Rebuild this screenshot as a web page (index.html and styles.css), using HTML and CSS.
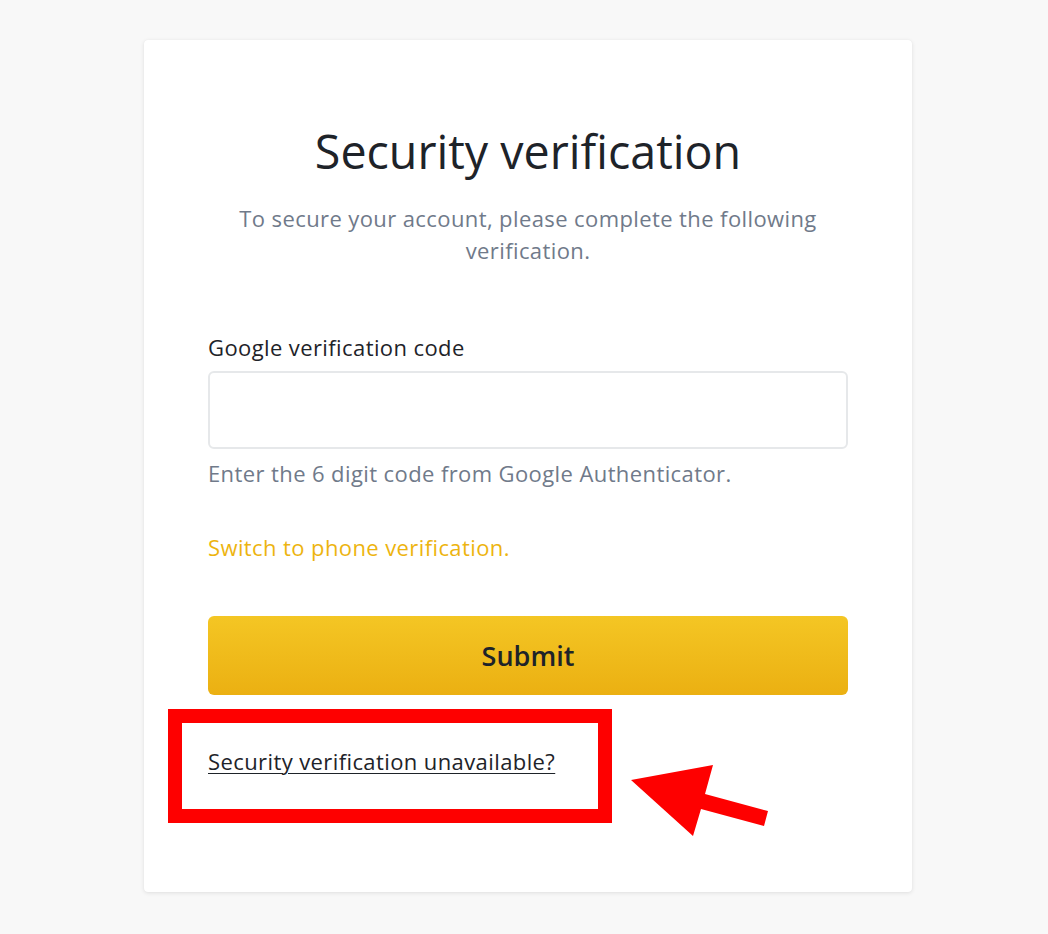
FILE: index.html
```html
<!DOCTYPE html>
<html lang="en">
<head>
<meta charset="utf-8">
<title>Security verification</title>
<link rel="stylesheet" href="styles.css">
</head>
<body>
<main class="page">
  <section class="card">
    <h1 class="title">Security verification</h1>
    <p class="subtitle">To secure your account, please complete the following verification.</p>
    <div class="field">
      <label class="label" for="code">Google verification code</label>
      <input class="input" id="code" type="text">
      <p class="help">Enter the 6 digit code from Google Authenticator.</p>
    </div>
    <a class="switch" href="#">Switch to phone verification.</a>
    <button class="submit" type="button">Submit</button>
    <div class="unavail-wrap">
      <a class="unavail" href="#">Security verification unavailable?</a>
      <div class="highlight"></div>
      <svg class="arrow" width="140" height="76" viewBox="0 0 140 76">
        <polygon points="2,15 84,0 76,29 139,46 135,61 72,44 64,71" fill="#fe0000"/>
      </svg>
    </div>
  </section>
</main>
</body>
</html>
```

FILE: styles.css
```css
* { box-sizing: border-box; }
html, body { margin: 0; padding: 0; }
body {
  background: #f8f8f8;
  font-family: "Open Sans", "Noto Sans", sans-serif;
  color: #1e2329;
}
.page {
  display: flex;
  justify-content: center;
  padding: 40px 0 0 8px;
  height: 934px;
}
.card {
  width: 768px;
  height: 852px;
  background: #fff;
  border-radius: 4px;
  box-shadow: 0 1px 4px rgba(0,0,0,0.10), 0 0 1px rgba(0,0,0,0.06);
  padding: 83px 64px 0;
  display: flex;
  flex-direction: column;
}
.title {
  margin: 0;
  font-size: 46.6px;
  line-height: 56px;
  font-weight: 400;
  text-align: center;
  color: #1e2329;
}
.subtitle,
.label,
.help,
.switch,
.unavail {
  font-size: 22px;
  line-height: 32px;
  letter-spacing: 0.4px;
}
.subtitle {
  margin: 23px 20px 0;
  text-align: center;
  color: #707a8a;
}
.field {
  margin-top: 65px;
  display: flex;
  flex-direction: column;
}
.label {
  color: #1e2329;
}
.input {
  margin-top: 8px;
  height: 78px;
  border: 2px solid #e6e8ea;
  border-radius: 6px;
  font: inherit;
  padding: 0 16px;
  outline: none;
}
.help {
  margin: 8px 0 0;
  color: #707a8a;
}
.switch {
  margin-top: 42px;
  color: #edb40f;
  text-decoration: none;
  align-self: flex-start;
}
.submit {
  margin-top: 53px;
  height: 79px;
  border: none;
  border-radius: 6px;
  background: linear-gradient(180deg, #f4c624 0%, #ebb012 100%);
  font-family: inherit;
  font-size: 27px;
  font-weight: 600;
  color: #1e2329;
}
.unavail-wrap {
  position: relative;
  margin-top: 50px;
}
.unavail {
  display: inline-block;
  color: #1e2329;
  text-decoration: underline;
  text-underline-offset: 3px;
  text-decoration-thickness: 1px;
}
.highlight {
  position: absolute;
  left: -40px;
  top: -36px;
  width: 444px;
  height: 114px;
  border: 14px solid #fe0000;
}
.arrow {
  position: absolute;
  left: 421px;
  top: 20px;
}
```
